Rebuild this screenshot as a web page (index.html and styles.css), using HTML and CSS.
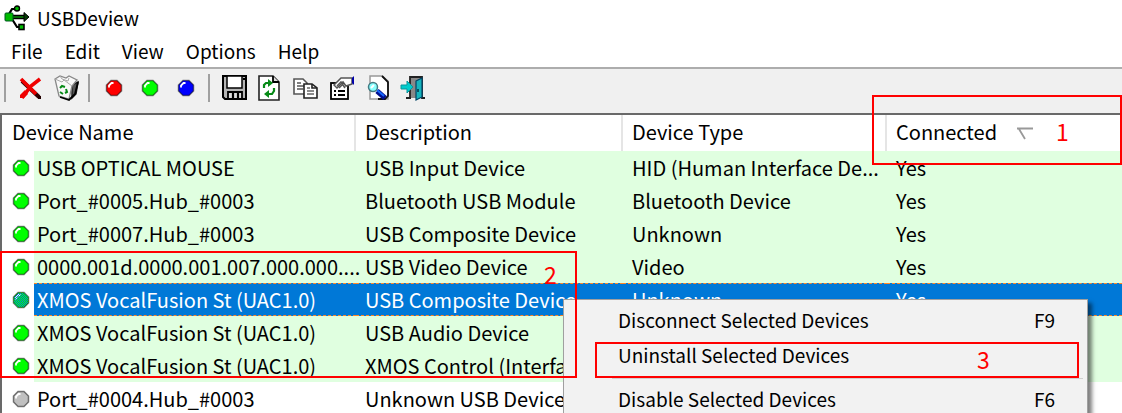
FILE: index.html
```html
<!DOCTYPE html>
<html lang="en">
<head>
<meta charset="utf-8">
<title>USBDeview</title>
<link rel="stylesheet" href="styles.css">
</head>
<body>
<svg class="defs" aria-hidden="true">
  <defs>
    <pattern id="dither" width="2" height="2" patternUnits="userSpaceOnUse">
      <rect width="1" height="1" fill="#0078d7"/><rect x="1" y="1" width="1" height="1" fill="#0078d7"/>
    </pattern>
    <symbol id="ball" viewBox="0 0 18 18">
      <path d="M6 1.500H12L16.500 6V12L12 16.500H6L1.500 12V6Z" fill="currentColor" stroke="#000" stroke-opacity=".5" stroke-width="1.500"/>
      <path d="M4 8.500V6.500L6.500 4H8.500" fill="none" stroke="#fff" stroke-width="1.800"/>
    </symbol>
  </defs>
</svg>
<main class="window">
  <header class="titlebar">
    <svg class="logo" viewBox="0 0 26 26" aria-hidden="true">
      <path d="M6 12H21M5 9L8 4H12M8 14L13 22H18" fill="none" stroke="#000" stroke-width="2.200"/>
      <path d="M6 12H22" stroke="#000" stroke-width="4.500"/>
      <path d="M6 12H21" stroke="#0a8a0a" stroke-width="1.500"/>
      <path d="M20 7.500L25 12L20 16.500Z" fill="#083a08" stroke="#000"/>
      <rect x="1" y="8" width="8" height="8" rx="1" fill="#0b0" stroke="#052"/>
      <circle cx="13" cy="3.500" r="2.500" fill="#0b0" stroke="#000" stroke-width="1.400"/>
      <rect x="15" y="19.500" width="5" height="5" fill="#0b0" stroke="#000" stroke-width="1.600"/>
    </svg>
    <h1 class="title">USBDeview</h1>
  </header>
  <nav class="menubar" aria-label="Main menu">
    <button class="menu-button">File</button>
    <button class="menu-button">Edit</button>
    <button class="menu-button">View</button>
    <button class="menu-button">Options</button>
    <button class="menu-button">Help</button>
  </nav>
  <div class="toolbar" role="toolbar" aria-label="Tools">
    <span class="divider"></span>
    <button class="tool" aria-label="Uninstall">
      <svg viewBox="0 0 28 28"><path d="M6 7L23 23" stroke="#300" stroke-width="4"/><path d="M5 5L20 20M24 5L15 12L6 24" fill="none" stroke="#f00000" stroke-width="3.600"/><path d="M9 16L4 21V24H8L12 20" fill="#f00000"/><rect x="22" y="22" width="3" height="3" fill="#200"/></svg>
    </button>
    <button class="tool" aria-label="Disconnect">
      <svg viewBox="0 0 28 28"><path d="M20 24L24 20L26 8L20 11Z" fill="#555" stroke="#222" stroke-width="1.500"/><path d="M3 5L8 2L14 4L17 2L25 6L20 12L17 25L7 22Z" fill="#f8f8f8" stroke="#888" stroke-width="1.300"/><path d="M3 5L10 8L12 6L20 12M8 2L10 5L16 7L17 4" fill="none" stroke="#aaa" stroke-width="1"/><path d="M8 23L17 26L23 20L26 8" fill="none" stroke="#000" stroke-width="1.800"/><path d="M8 14L10 12L13 13M14 15L15 18L13 19M11 20L8 18" fill="none" stroke="#078a17" stroke-width="2"/></svg>
    </button>
    <span class="divider"></span>
    <button class="tool" aria-label="Red mark"><svg class="mark red"><use href="#ball"/></svg></button>
    <button class="tool" aria-label="Green mark"><svg class="mark green"><use href="#ball"/></svg></button>
    <button class="tool" aria-label="Blue mark"><svg class="mark blue"><use href="#ball"/></svg></button>
    <span class="divider"></span>
    <button class="tool" aria-label="Save">
      <svg viewBox="0 0 28 28"><path d="M3 2H26V25H5L3 23Z" fill="#b5b5b5" stroke="#000" stroke-width="2"/><rect x="7" y="2" width="15" height="12" fill="#fff" stroke="#000" stroke-width="1.500"/><path d="M8 25V18H22V25Z" fill="#ddd" stroke="#000" stroke-width="1.800"/><path d="M13 19V24M18 19V24" stroke="#000" stroke-width="2.200"/><rect x="23" y="4" width="2" height="2" fill="#000"/></svg>
    </button>
    <button class="tool" aria-label="Refresh">
      <svg viewBox="0 0 28 28"><path d="M3 2H17L23 8V26H3Z" fill="#fff" stroke="#222" stroke-width="1.600"/><path d="M17 2V8H23" fill="#ddd" stroke="#000" stroke-width="1.800"/><path d="M8 14V11L10 9H13M18 14V17L16 20H12" fill="none" stroke="#078a17" stroke-width="2.200"/><path d="M12 5L17 9L12 13ZM13 16L8 20L13 24Z" fill="#078a17"/></svg>
    </button>
    <button class="tool" aria-label="Copy">
      <svg viewBox="0 0 28 28"><path d="M2 5H11L15 9V20H2Z" fill="#fff" stroke="#555" stroke-width="1.600"/><path d="M5 9H9M5 12H12M5 15H11" stroke="#555" stroke-width="1.500"/><path d="M12 10H20L25 14V24H12Z" fill="#fff" stroke="#222" stroke-width="1.600"/><path d="M20 10V14H25" fill="none" stroke="#222" stroke-width="1.600"/><path d="M15 14H18M15 17H22M15 20H22" stroke="#666" stroke-width="1.500"/></svg>
    </button>
    <button class="tool" aria-label="Properties">
      <svg viewBox="0 0 28 28"><rect x="3" y="9" width="17" height="16" fill="#fff" stroke="#000" stroke-width="1.800"/><path d="M6 17H8M10 17H17M6 21H8M10 21H17" stroke="#000" stroke-width="1.800"/><path d="M6 11L13 4H24V10L18 12L15 8L9 14Z" fill="#fff" stroke="#555" stroke-width="1.500"/><path d="M9 12L13 8L17 14M11 14L15 10" fill="none" stroke="#555" stroke-width="1.500"/><path d="M24 4L26 2V11L24 9" fill="#00a"/></svg>
    </button>
    <button class="tool" aria-label="Find">
      <svg viewBox="0 0 28 28"><path d="M6 2H18L24 7V25H6Z" fill="#fff" stroke="#999" stroke-width="1.500"/><path d="M18 2L24 8V22L21 25H14" fill="none" stroke="#111" stroke-width="1.800"/><path d="M13 17L21 24" stroke="#001090" stroke-width="5"/><path d="M13 16L20 22" stroke="#1668ff" stroke-width="2"/><circle cx="9" cy="13" r="4.500" fill="#8ff" stroke="#447b83" stroke-width="1.500"/><path d="M7 14L10 11" stroke="#fff" stroke-width="2"/></svg>
    </button>
    <button class="tool" aria-label="Exit">
      <svg viewBox="0 0 28 28"><path d="M10 24V3H22V24H25" fill="#888" stroke="#222" stroke-width="1.800"/><path d="M6 24H11" stroke="#222" stroke-width="2"/><path d="M16 7L22 4V23L16 26Z" fill="#16b5bd" stroke="#046" stroke-width="1.200"/><path d="M1 11H7V7L13 13L7 19V15H1Z" fill="#0cc" stroke="#08959c"/><path d="M18 15V18" stroke="#034" stroke-width="1.500"/></svg>
    </button>
  </div>
  <section class="list">
    <table class="devices">
      <colgroup><col class="col-icon"><col class="col-name"><col class="col-desc"><col class="col-type"><col></colgroup>
      <thead>
        <tr><th colspan="2" class="first">Device Name</th><th>Description</th><th>Device Type</th>
        <th>Connected<svg class="sort" viewBox="0 0 16 13" aria-hidden="true"><path d="M0 1.500H16M2 2L8 12" fill="none" stroke="#999" stroke-width="1.800"/></svg></th></tr>
      </thead>
      <tbody>
        <tr><td class="status"><svg class="mark green"><use href="#ball"/></svg></td><td>USB OPTICAL MOUSE</td><td>USB Input Device</td><td>HID (Human Interface De...</td><td>Yes</td></tr>
        <tr><td class="status"><svg class="mark green"><use href="#ball"/></svg></td><td>Port_#0005.Hub_#0003</td><td>Bluetooth USB Module</td><td>Bluetooth Device</td><td>Yes</td></tr>
        <tr><td class="status"><svg class="mark green"><use href="#ball"/></svg></td><td>Port_#0007.Hub_#0003</td><td>USB Composite Device</td><td>Unknown</td><td>Yes</td></tr>
        <tr><td class="status"><svg class="mark green"><use href="#ball"/></svg></td><td>0000.001d.0000.001.007.000.000....</td><td>USB Video Device</td><td>Video</td><td>Yes</td></tr>
        <tr class="selected"><td class="status"><svg class="mark green" viewBox="0 0 18 18"><use href="#ball"/><path d="M6 2H12L16 6V12L12 16H6L2 12V6Z" fill="url(#dither)"/></svg></td><td>XMOS VocalFusion St (UAC1.0)</td><td>USB Composite Device</td><td>Unknown</td><td>Yes</td></tr>
        <tr><td class="status"><svg class="mark green"><use href="#ball"/></svg></td><td>XMOS VocalFusion St (UAC1.0)</td><td>USB Audio Device</td><td></td><td></td></tr>
        <tr><td class="status"><svg class="mark green"><use href="#ball"/></svg></td><td>XMOS VocalFusion St (UAC1.0)</td><td>XMOS Control (Interfa</td><td></td><td></td></tr>
        <tr class="offline"><td class="status"><svg class="mark gray"><use href="#ball"/></svg></td><td>Port_#0004.Hub_#0003</td><td>Unknown USB Device</td><td></td><td></td></tr>
      </tbody>
    </table>
  </section>
  <div class="context-menu" role="menu">
    <button class="menu-item" role="menuitem"><span>Disconnect Selected Devices</span><span class="key">F9</span></button>
    <button class="menu-item" role="menuitem"><span>Uninstall Selected Devices</span></button>
    <hr class="rule">
    <button class="menu-item" role="menuitem"><span>Disable Selected Devices</span><span class="key">F6</span></button>
  </div>
  <div class="callout callout-sort"><span>1</span></div>
  <div class="callout callout-rows"><span>2</span></div>
  <div class="callout callout-action"><span>3</span></div>
</main>
</body>
</html>
```
FILE: styles.css
```css
* { box-sizing: border-box; }
body {
  margin: 0;
  background: #fff;
  color: #000;
  font: 20px/32px "Noto Sans CJK SC", "Noto Sans", sans-serif;
}
button { margin: 0; padding: 0; border: 0; background: none; color: inherit; font: inherit; }
.defs { position: absolute; width: 0; height: 0; }
.window { position: relative; height: 100vh; overflow: hidden; }
.titlebar { display: flex; align-items: center; gap: 7px; height: 35px; padding-left: 4px; }
.logo { width: 26px; height: 26px; }
.title { margin: 0; font-size: 19px; font-weight: 400; }
.menubar { display: flex; gap: 22px; height: 32px; padding-left: 11px; font-size: 19px; }
.toolbar {
  display: flex;
  align-items: center;
  height: 46px;
  border-top: 2px solid #adadad;
  background: #f0f0f0;
  padding-bottom: 6px;
}
.divider { width: 12px; height: 28px; padding-left: 4px; }
.divider::before { content: ""; display: block; width: 2px; height: 100%; background: #a0a0a0; }
.tool { display: flex; align-items: center; justify-content: center; width: 36px; height: 36px; }
.tool svg { width: 28px; height: 28px; }
.tool .mark, .mark { display: block; width: 18px; height: 18px; }
.red { color: #f00; }
.green { color: #0f0; }
.blue { color: #00f; }
.gray { color: #c0c0c0; }
.list { border-top: 2px solid #696969; border-left: 2px solid #696969; }
.devices { width: 100%; table-layout: fixed; border-collapse: separate; border-spacing: 0; }
.col-icon { width: 32px; }
.col-name { width: 322px; }
.col-desc { width: 267px; }
.col-type { width: 264px; }
th { height: 36px; padding: 0 0 2px 9px; border-right: 2px solid #e5e5e5; text-align: left; font-weight: 400; white-space: nowrap; }
th.first { padding-left: 10px; }
th:last-child { border-right: 0; }
td { height: 33px; padding: 0 0 0 9px; background: #e0ffe0; white-space: nowrap; }
td:nth-child(2) { padding-left: 3px; }
td.status { padding: 0 0 0 10px; background: #fff; }
.selected td:not(.status) {
  border-top: 1px dashed #ff8728;
  border-bottom: 1px dashed #ff8728;
  background: #0078d7;
  color: #fff;
  line-height: 31px;
}
.offline td { background: #fff; }
.sort { width: 16px; height: 13px; margin-left: 20px; }
.context-menu {
  position: absolute;
  top: 299px;
  left: 563px;
  width: 525px;
  height: 160px;
  padding-top: 4px;
  border: 1px solid #a0a0a0;
  background: #f2f2f2;
  box-shadow: 4px 4px 4px rgba(0, 0, 0, .5);
  font-size: 19px;
}
.menu-item { display: flex; justify-content: space-between; width: 100%; height: 35px; padding: 0 32px 0 54px; }
.rule { margin: 4px 4px 4px 48px; border: 0; border-top: 1px solid #d0d0d0; }
.callout { position: absolute; border: 2px solid #f00; color: #f00; pointer-events: none; font: 23px/26px "Noto Sans CJK SC", sans-serif; }
.callout-sort { top: 95px; left: 872px; width: 250px; height: 70px; padding: 21px 0 0 182px; }
.callout-rows { top: 251px; left: 0; width: 577px; height: 127px; padding: 8px 0 0 542px; }
.callout-action { top: 342px; left: 595px; width: 484px; height: 36px; padding: 2px 0 0 380px; }
```
